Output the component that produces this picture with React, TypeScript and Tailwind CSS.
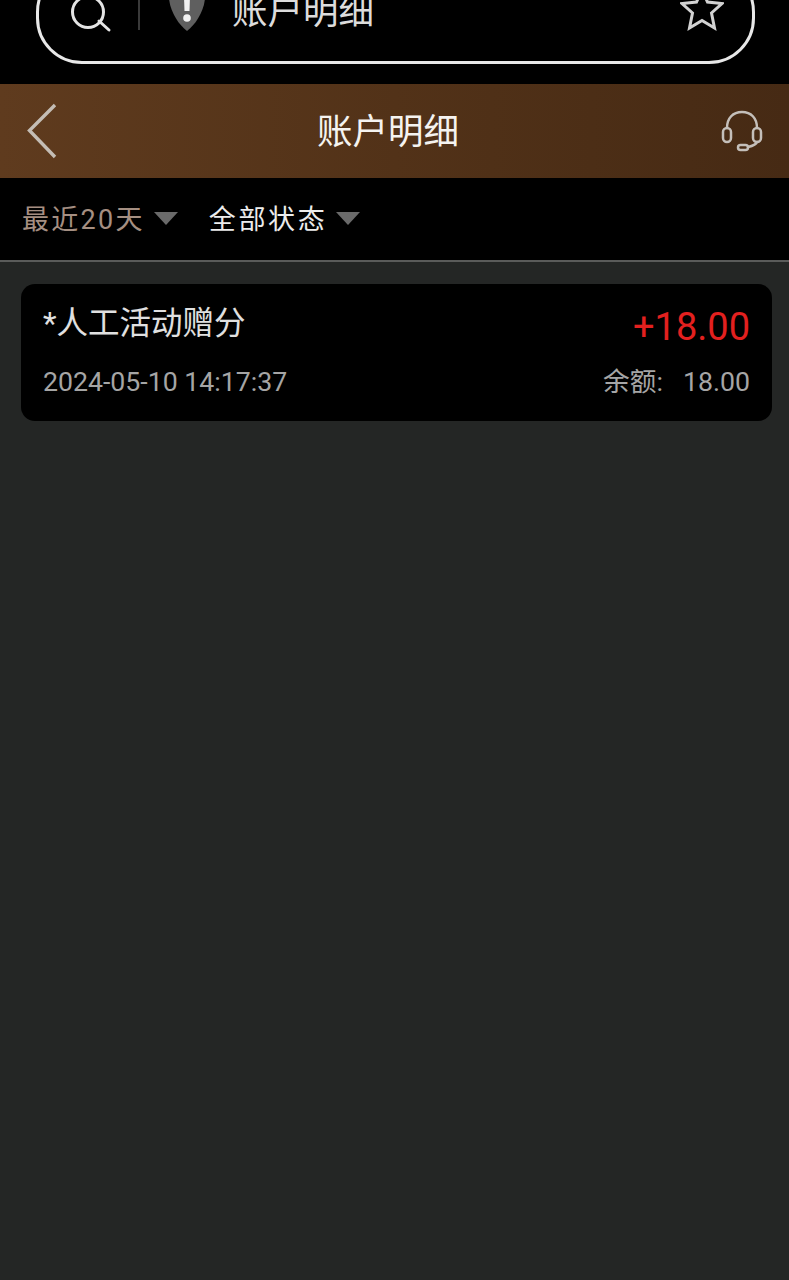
const fontStack = "font-['Roboto','Noto_Sans_CJK_SC',sans-serif]"

function SearchIcon() {
  return (
    <svg width="42" height="42" viewBox="0 0 42 42" fill="none" stroke="#e4e4e4" strokeWidth="3" strokeLinecap="round">
      <circle cx="18" cy="18" r="15.500" />
      <path d="M29 27 L39 36" />
    </svg>
  )
}

function ShieldIcon() {
  return (
    <svg width="38" height="62" viewBox="0 0 38 62">
      <path d="M2 0 H36 C37 8 37.500 16 37 28 C36 42 27 55 19 61 C11 55 2 42 1 28 C0.500 16 1 8 2 0 Z" fill="#5f5f5f" />
      <path d="M15.500 12 H22.500 L21.500 41 H16.500 Z" fill="#f2f2f2" />
      <circle cx="19" cy="48" r="3.800" fill="#f2f2f2" />
    </svg>
  )
}

function StarIcon() {
  return (
    <svg width="44" height="44" viewBox="0 0 44 44" fill="none" stroke="#d2d2d2" strokeWidth="3" strokeLinejoin="miter">
      <path d="M22 2 L27.500 14 L42 15.500 L31.500 25 L34.500 40 L22 32.500 L9.500 40 L12.500 25 L2 15.500 L16.500 14 Z" />
    </svg>
  )
}

function BackIcon() {
  return (
    <svg width="32" height="56" viewBox="0 0 32 56" fill="none" stroke="#c4bdb5" strokeWidth="3.400">
      <path d="M29 2 L3.500 27.500 L29 54" />
    </svg>
  )
}

function HeadsetIcon() {
  return (
    <svg width="42" height="42" viewBox="0 0 42 42" fill="none" stroke="#c4bfba" strokeWidth="2.500" strokeLinecap="round">
      <path d="M6 18 C6 8 12 2 21 2 C30 2 36 8 36 18" />
      <rect x="2" y="18" width="8" height="14" rx="4" />
      <rect x="32" y="18" width="8" height="14" rx="4" />
      <path d="M36 32 C35 35 31 36 27 37" />
      <rect x="17" y="35" width="10" height="5" rx="2.500" />
    </svg>
  )
}

function Caret() {
  return <span className="h-0 w-0 border-x-[12px] border-t-[13px] border-x-transparent border-t-[#6a6a6a]" />
}

export default function App() {
  return (
    <div className={`flex min-h-[1280px] flex-col overflow-hidden bg-[#242625] ${fontStack}`}>
      <div className="h-[84px] overflow-hidden bg-black">
        <div className="-mt-[34px] mr-[34px] ml-[36px] flex h-[98px] items-center rounded-[46px] border-[3px] border-[#e8e8e8] pr-[28px] pl-[31px]">
          <SearchIcon />
          <span className="ml-[26px] h-[30px] w-[2px] bg-[#3a3a3a]" />
          <span className="ml-[28px] -translate-y-[14px]"><ShieldIcon /></span>
          <span className="ml-[26px] -translate-y-[2px] text-[35.500px] leading-none text-[#dcdcdc]">账户明细</span>
          <span className="ml-auto -translate-y-[5px]"><StarIcon /></span>
        </div>
      </div>

      <div className="flex h-[94px] items-center justify-between bg-gradient-to-r from-[#5f3b1e] via-[#523218] to-[#462a14] pr-[26px] pl-[26px]">
        <BackIcon />
        <h1 className="ml-[-3px] translate-y-[2px] text-[35.500px] leading-none font-normal text-[#f5f3f0]">账户明细</h1>
        <HeadsetIcon />
      </div>

      <div className="flex h-[84px] items-center border-b-2 border-[#5a5b5a] bg-black pb-[1px] pl-[22px]">
        <div className="flex items-center gap-[9px]">
          <span className="translate-y-[2px] text-[27px] leading-none tracking-[2.300px] text-[#a58f82]">最近20天</span>
          <Caret />
        </div>
        <div className="ml-[31px] flex items-center gap-[9px]">
          <span className="translate-y-[2px] text-[27px] leading-none tracking-[2.600px] text-[#ececec]">全部状态</span>
          <Caret />
        </div>
      </div>

      <div className="pt-[22px] pr-[17px] pl-[21px]">
        <div className="flex h-[137px] flex-col justify-between rounded-[14px] bg-black px-[22px] pt-[22px] pb-[23px]">
          <div className="flex items-start justify-between">
            <span className="text-[31.500px] leading-[36px] text-[#e0e0e0]">*人工活动赠分</span>
            <span className="mt-[1px] text-[38px] leading-[40px] text-[#e3201f]">+18.00</span>
          </div>
          <div className="flex items-center justify-between text-[26.700px] leading-[32px] text-[#a5a5a5]">
            <span>2024-05-10 14:17:37</span>
            <span>余额:<span className="ml-[20px]">18.00</span></span>
          </div>
        </div>
      </div>
    </div>
  )
}
